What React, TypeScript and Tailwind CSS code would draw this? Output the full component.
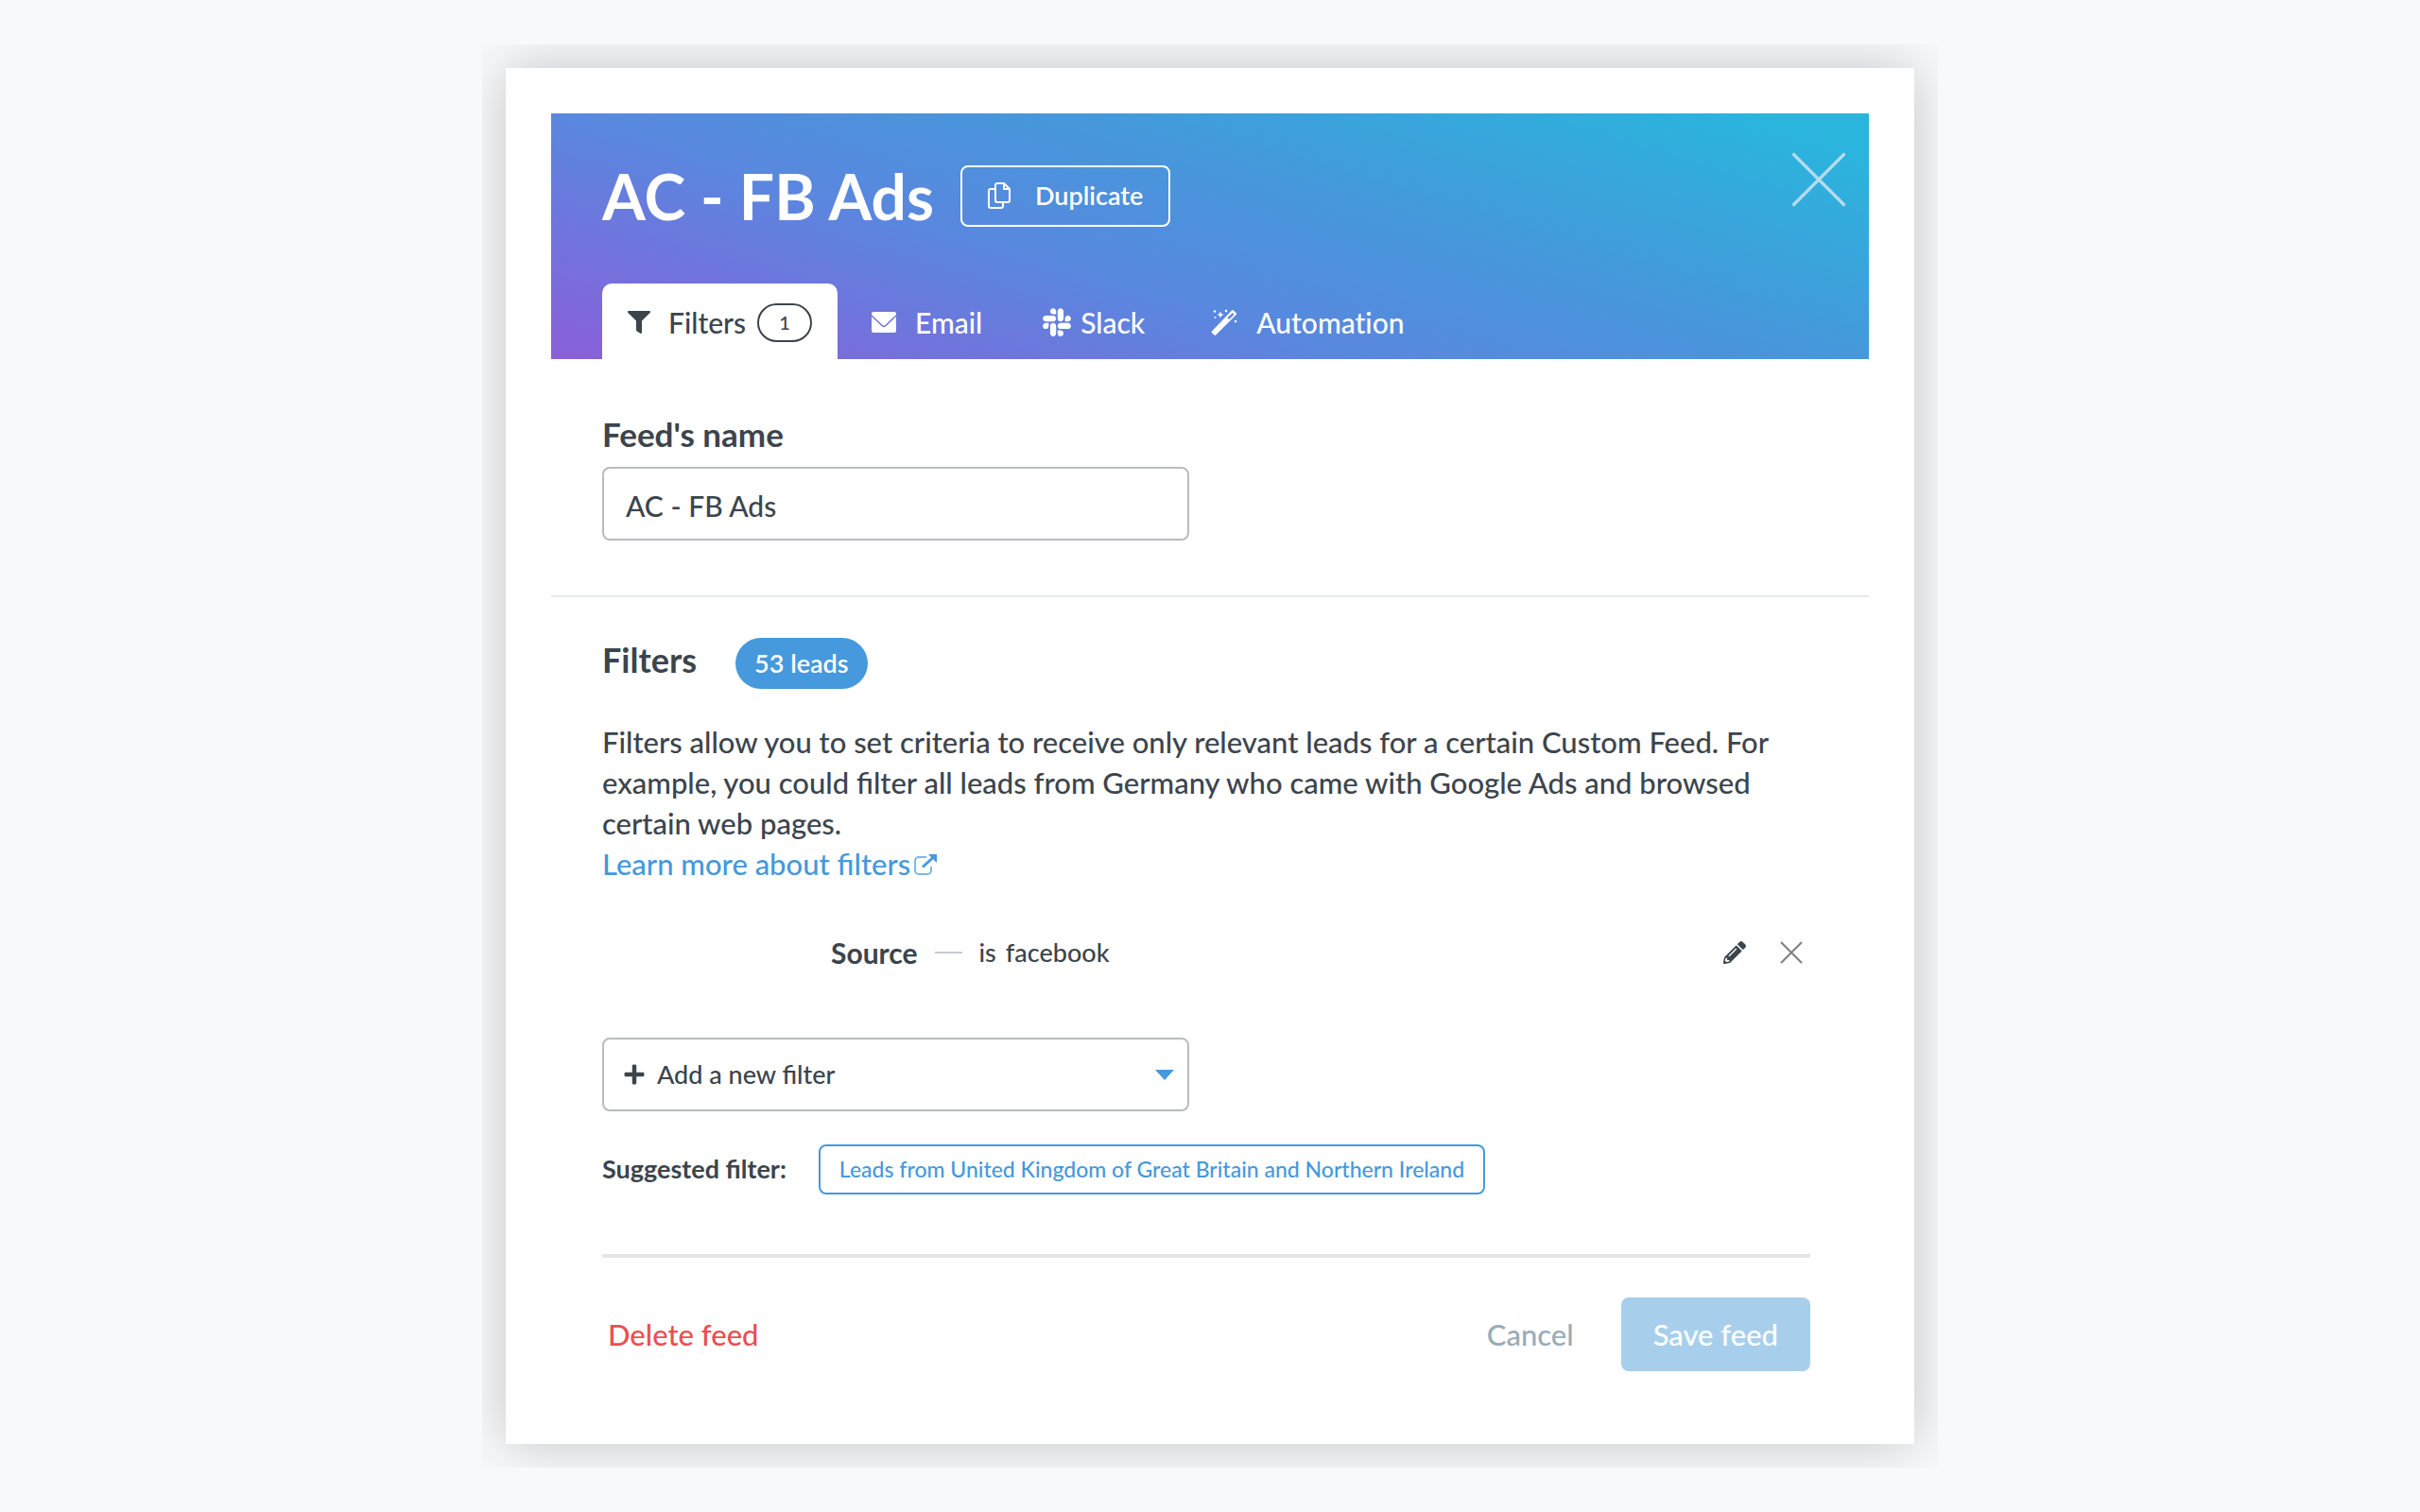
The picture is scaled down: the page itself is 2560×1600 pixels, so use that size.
import type { ReactNode } from "react";
import { FaFilter, FaPencilAlt, FaPlus, FaSlack } from "react-icons/fa";

function CloseIcon({ className, strokeWidth }: { className: string; strokeWidth: number }) {
  return (
    <svg viewBox="0 0 24 24" className={className} fill="none" stroke="currentColor" strokeWidth={strokeWidth} aria-hidden>
      <path d="M1 1 23 23M23 1 1 23" />
    </svg>
  );
}

function CopyIcon() {
  return (
    <svg viewBox="0 0 24 28" className="h-7 w-6" fill="none" stroke="currentColor" strokeWidth="2" strokeLinejoin="round" aria-hidden>
      <path d="M8 7H3a2 2 0 0 0-2 2v16a2 2 0 0 0 2 2h11a2 2 0 0 0 2-2v-3" />
      <path d="M17 1h-7a2 2 0 0 0-2 2v16a2 2 0 0 0 2 2h11a2 2 0 0 0 2-2V7Z" />
      <path d="M17 1v6h6" />
    </svg>
  );
}

function MailIcon() {
  return (
    <svg viewBox="0 0 26 22" className="h-[22px] w-[26px]" fill="currentColor" aria-hidden>
      <path d="M2 0h22a2 2 0 0 1 2 2v1L14.4 14a2 2 0 0 1-2.8 0L0 3V2a2 2 0 0 1 2-2Z" />
      <path d="M0 5 10.800 15.200a3.200 3.200 0 0 0 4.400 0L26 5v15a2 2 0 0 1-2 2H2a2 2 0 0 1-2-2Z" />
    </svg>
  );
}

function WandIcon() {
  return (
    <svg viewBox="0 0 28 28" className="size-7" fill="currentColor" aria-hidden>
      <path
        fillRule="evenodd"
        d="M1 23.500 21.800 1.700a1.600 1.600 0 0 1 2.300 0l2.400 2.300a1.600 1.600 0 0 1 0 2.300L5.200 27.500a1.200 1.200 0 0 1-1.700 0L1 25.200a1.200 1.200 0 0 1 0-1.700ZM17.500 9.300l1.700 1.700 5.200-5.300-1.500-1.600Z"
      />
      <path d="m10 2.500 1.100 2.400L13.500 6l-2.400 1.100L10 9.500 8.900 7.100 6.500 6l2.400-1.100Z" />
      <circle cx="4" cy="2.500" r="1.300" />
      <circle cx="16" cy="2" r="1.300" />
      <circle cx="26" cy="13" r="1.300" />
      <circle cx="4.500" cy="9" r="1" />
    </svg>
  );
}

function ExternalIcon() {
  return (
    <svg viewBox="0 0 24 22" className="h-[22px] w-6" fill="none" stroke="currentColor" aria-hidden>
      <path d="M13 3H5a4 4 0 0 0-4 4v10a4 4 0 0 0 4 4h9a4 4 0 0 0 4-4v-4" strokeWidth="2" opacity="0.7" />
      <path d="m9 13.500 11-10" strokeWidth="3" />
      <path d="M15 0h9v9Z" fill="currentColor" stroke="none" />
    </svg>
  );
}

function Tab({ icon, label }: { icon: ReactNode; label: string }) {
  return (
    <button type="button" role="tab" aria-selected={false} className="flex items-center pt-0.5 text-white">
      {icon}
      {label}
    </button>
  );
}

export default function App() {
  return (
    <main className="min-h-screen bg-[#f7f9fb] py-[47px] font-['Lato',sans-serif] font-medium text-[#3c444c]">
      <div className="mx-auto w-full max-w-[1540px] overflow-hidden p-[25px]">
        <div role="dialog" aria-labelledby="feed-title" className="bg-white p-12 pb-[77px] shadow-[0_0_56px_rgba(0,0,0,0.21)]">
          <header className="flex h-[260px] flex-col justify-between bg-[linear-gradient(17deg,#8a5fd8,#5a87df_38%,#4598db_62%,#2ab5dd_94%)] pl-[54px]">
            <div className="flex items-start justify-between pr-[23px]">
              <div className="flex items-center gap-7 pt-[45px]">
                <h1 id="feed-title" className="pt-0.5 text-[66px] leading-[82px] font-bold text-white">AC - FB Ads</h1>
                <button type="button" className="flex h-[65px] items-center gap-[26px] rounded-lg border-2 border-white px-[27px] text-[27px] font-semibold text-white">
                  <CopyIcon />
                  Duplicate
                </button>
              </div>
              <button type="button" aria-label="Close" className="pt-10 text-[#b5dcef]">
                <CloseIcon className="size-[60px]" strokeWidth={1.3} />
              </button>
            </div>

            <div role="tablist" className="flex h-20 text-[30px] [font-variant-ligatures:none]">
              <button type="button" role="tab" aria-selected className="mr-9 flex items-center rounded-t-[10px] bg-white px-[27px] pt-0.5">
                <FaFilter size={24} className="mr-[19px]" />
                Filters
                <span className="ml-3 flex h-[41px] w-[58px] items-center justify-center rounded-full border-2 border-[#3c444c] text-[20px]">1</span>
              </button>
              <div className="flex gap-[62px]">
                <Tab icon={<span className="mr-5"><MailIcon /></span>} label="Email" />
                <Tab icon={<FaSlack size={34} className="mr-2" />} label="Slack" />
                <Tab icon={<span className="mr-5 ml-2"><WandIcon /></span>} label="Automation" />
              </div>
            </div>
          </header>

          <section className="border-b-2 border-[#e8e9ea] px-[54px] pt-[58px] pb-[58px]">
            <label htmlFor="feed-name" className="block text-[35px] leading-[42px] font-bold">Feed&apos;s name</label>
            <input
              id="feed-name"
              defaultValue="AC - FB Ads"
              className="mt-3.5 block h-[78px] w-full max-w-[621px] rounded-lg border-2 border-[#b9bbbd] pt-1 pl-[23px] text-[30px]"
            />
          </section>

          <section className="pr-[62px] pl-[54px]">
            <div className="flex items-start gap-[41px] pt-[43px]">
              <h2 className="text-[36px] leading-[46px] font-bold">Filters</h2>
              <span className="flex h-[54px] items-center rounded-full bg-[#4599dc] px-5 text-[27px] font-semibold text-white">53 leads</span>
            </div>
            <p className="mt-[35px] text-[31px] leading-[43px]">
              Filters allow you to set criteria to receive only relevant leads for a certain Custom Feed. For example, you could filter all leads from Germany who came with Google Ads and browsed certain web pages.
            </p>
            <a href="#filters-help" className="inline-flex items-center gap-1 text-[31px] leading-[43px] text-[#4599dc]">
              Learn more about filters
              <ExternalIcon />
            </a>

            <div className="mt-12 flex h-12 items-center pr-2 pl-[242px] text-[27px]">
              <strong className="text-[30px] font-bold">Source</strong>
              <span className="mx-[18px] h-0.5 w-[29px] bg-[#c9cccf]" />
              <span>is</span>
              <span className="ml-2.5">facebook</span>
              <button type="button" aria-label="Edit filter" className="ml-auto">
                <FaPencilAlt size={24} />
              </button>
              <button type="button" aria-label="Remove filter" className="ml-9 text-[#7a7f84]">
                <CloseIcon className="size-6" strokeWidth={2} />
              </button>
            </div>

            <button type="button" aria-haspopup="listbox" className="mt-[66px] flex h-[78px] w-full max-w-[621px] items-center rounded-lg border-2 border-[#b9bbbd] pr-3.5 pl-5 text-[27px]">
              <FaPlus size={24} className="mr-3" />
              Add a new filter
              <span className="ml-auto border-x-10 border-t-11 border-x-transparent border-t-[#4599dc]" />
            </button>

            <div className="mt-[35px] flex items-center gap-[34px]">
              <span className="text-[27px] font-bold">Suggested filter:</span>
              <button type="button" className="h-[53px] rounded-lg border-2 border-[#4599dc] px-5 text-[23px] text-[#4599dc]">
                Leads from United Kingdom of Great Britain and Northern Ireland
              </button>
            </div>

            <footer className="mt-[63px] flex items-center border-t-4 border-[#e6e6e7] pt-[42px] text-[31px]">
              <button type="button" className="pl-1.5 text-[#ea4f51]">Delete feed</button>
              <button type="button" className="ml-auto text-[#9aabb6]">Cancel</button>
              <button type="button" className="ml-[50px] h-[78px] rounded-lg bg-[#a7cfec] px-[34px] text-white">Save feed</button>
            </footer>
          </section>
        </div>
      </div>
    </main>
  );
}
